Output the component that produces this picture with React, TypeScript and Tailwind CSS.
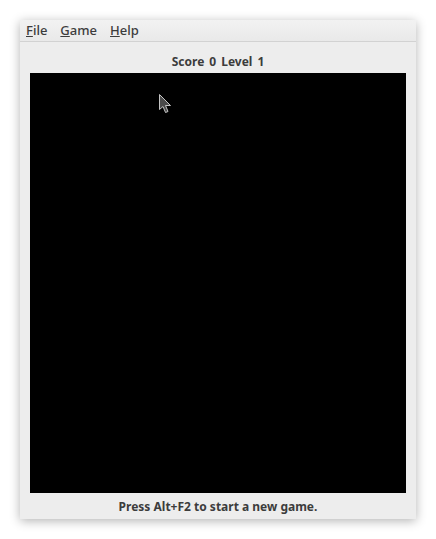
const font = { fontFamily: '"Noto Sans", "Open Sans", sans-serif' };

function Cursor() {
  return (
    <svg width="16" height="24" viewBox="0 0 16 24" className="absolute left-[128px] top-[20px]">
      <path
        d="M1.5 1.5 L1.5 16.5 L5 13.5 L7.5 19.5 L10 18.5 L7.5 12.5 L12.5 12.5 Z"
        fill="#4a4a4a"
        stroke="#c4c4c4"
        strokeWidth="1"
        strokeLinejoin="round"
      />
    </svg>
  );
}

export default function App() {
  return (
    <div className="w-[436px] h-[539px] bg-white pt-5 pl-5" style={font}>
      <div className="w-[396px] h-[499px] bg-[#ededed] flex flex-col shadow-[0_2px_10px_rgba(0,0,0,0.3)]">
        {/* Menu bar */}
        <div className="h-[22px] flex items-center gap-[13px] px-[6px] text-[13px] font-medium text-[#3c3c3c] bg-gradient-to-b from-[#f2f2f2] to-[#e9e9e9] border-b border-[#d2d2d2]">
          <span><u>F</u>ile</span>
          <span><u>G</u>ame</span>
          <span><u>H</u>elp</span>
        </div>

        <div className="h-[31px] flex items-center justify-center text-[12px] font-bold text-[#3c3c3c] gap-[5px] pt-[8px]">
          <span>Score</span>
          <span>0</span>
          <span>Level</span>
          <span>1</span>
        </div>

        {/* Board */}
        <div className="relative mx-[10px] h-[420px] bg-black">
          <Cursor />
        </div>

        <div className="flex-1 flex items-center justify-center text-[12px] font-bold text-[#3c3c3c] pt-[2px]">
          Press Alt+F2 to start a new game.
        </div>
      </div>
    </div>
  );
}
